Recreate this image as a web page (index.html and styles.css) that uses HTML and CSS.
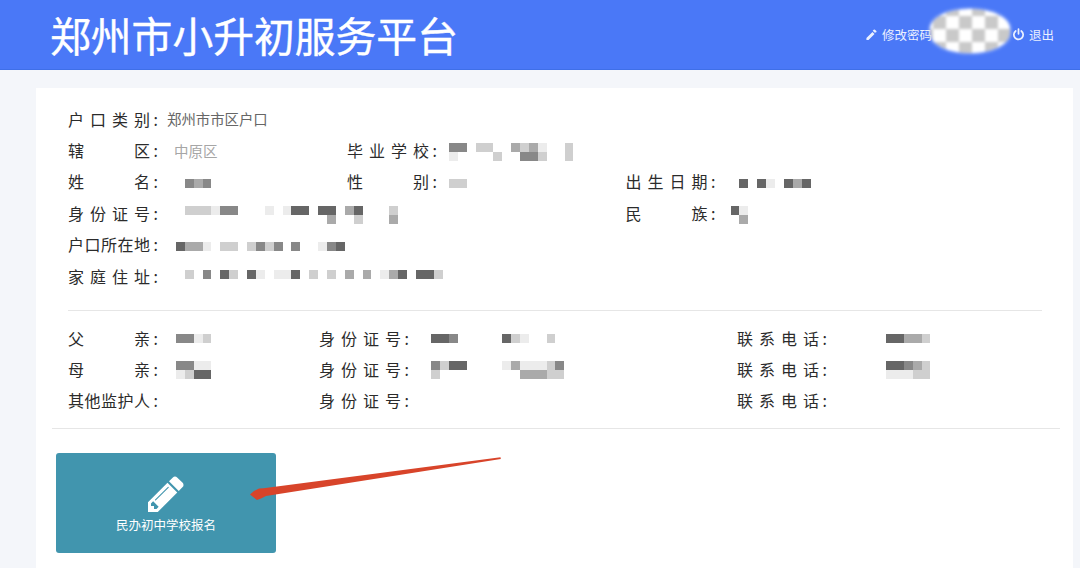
FILE: index.html
```html
<!DOCTYPE html>
<html lang="zh-CN">
<head>
<meta charset="utf-8">
<title>郑州市小升初服务平台</title>
<link rel="stylesheet" href="styles.css">
</head>
<body>
<header class="topbar">
  <h1 class="brand">郑州市小升初服务平台</h1>
  <nav class="usernav">
    <a class="navlink"><svg class="ico-pen" viewBox="0 0 1536 1792"><path fill="currentColor" d="M0 1376v288h288l832-832-288-288zM1358 594q37-39 37-91t-37-91l-178-178q-39-37-91-37t-90 37l-133 133 288 288z"/></svg>修改密码</a>
    <span class="avatar-mask"></span>
    <a class="navlink"><svg class="ico-power" viewBox="0 0 14 14"><path fill="none" stroke="currentColor" stroke-width="1.9" stroke-linecap="round" d="M4 3.2a5 5 0 1 0 6 0M7 1.2v5"/></svg>退出</a>
  </nav>
</header>

<main class="card">
  <section class="info">
    <div class="row top">
      <div class="field first"><span class="k">户口类别</span><span class="v plain">郑州市市区户口</span></div>
    </div>
    <div class="row top">
      <div class="field first"><span class="k">辖区</span><span class="v muted">中原区</span></div>
      <div class="field second">
        <span class="k">毕业学校</span>
        <div class="mosaic">
          <div class="mr"><i class="t2"></i><i class="t2"></i><i></i><i class="t4"></i><i class="t4"></i><i></i><i></i><i class="t3"></i><i class="t4"></i><i class="t3"></i><i class="t5"></i><i></i><i></i><i class="t4"></i></div>
          <div class="mr"><i class="t5"></i><i></i><i></i><i></i><i></i><i class="t4"></i><i></i><i></i><i class="t2"></i><i class="t2"></i><i class="t4"></i><i></i><i></i><i class="t4"></i></div>
        </div>
      </div>
    </div>
    <div class="row top">
      <div class="field first">
        <span class="k">姓名</span>
        <div class="mosaic"><div class="mr"><i></i><i></i><i class="t2"></i><i class="t3"></i><i class="t2"></i></div></div>
      </div>
      <div class="field second">
        <span class="k">性别</span>
        <div class="mosaic"><div class="mr"><i class="t4"></i><i class="t4"></i></div></div>
      </div>
      <div class="field third">
        <span class="k">出生日期</span>
        <div class="mosaic"><div class="mr"><i></i><i class="t1"></i><i></i><i class="t1"></i><i class="t5"></i><i></i><i class="t1"></i><i class="t3"></i><i class="t1"></i></div></div>
      </div>
    </div>
    <div class="row top">
      <div class="field first">
        <span class="k">身份证号</span>
        <div class="mosaic">
          <div class="mr"><i></i><i></i><i class="t4"></i><i class="t4"></i><i class="t4"></i><i class="t5"></i><i class="t2"></i><i class="t2"></i><i></i><i></i><i></i><i class="t5"></i><i></i><i class="t5"></i><i class="t1"></i><i class="t1"></i><i></i><i class="t1"></i><i class="t1"></i><i></i><i class="t3"></i><i class="t1"></i><i></i><i></i><i></i><i class="t4"></i></div>
          <div class="mr"><i></i><i></i><i></i><i></i><i></i><i></i><i></i><i></i><i></i><i></i><i></i><i></i><i></i><i></i><i></i><i></i><i></i><i></i><i class="t3"></i><i></i><i></i><i class="t4"></i><i></i><i></i><i></i><i class="t3"></i></div>
        </div>
      </div>
      <div class="field second"></div>
      <div class="field third">
        <span class="k">民族</span>
        <div class="mosaic">
          <div class="mr"><i class="t1"></i><i class="t5"></i></div>
          <div class="mr"><i></i><i class="t3"></i></div>
        </div>
      </div>
    </div>
    <div class="row top">
      <div class="field first wide">
        <span class="k">户口所在地</span>
        <div class="mosaic"><div class="mr"><i></i><i class="t1"></i><i class="t3"></i><i class="t3"></i><i class="t5"></i><i></i><i class="t4"></i><i class="t4"></i><i></i><i class="t4"></i><i class="t2"></i><i class="t4"></i><i class="t2"></i><i></i><i class="t2"></i><i></i><i></i><i class="t5"></i><i class="t2"></i><i class="t1"></i></div></div>
      </div>
    </div>
    <div class="row top home">
      <div class="field first wide">
        <span class="k">家庭住址</span>
        <div class="mosaic"><div class="mr"><i></i><i></i><i class="t4"></i><i></i><i class="t2"></i><i></i><i class="t1"></i><i class="t4"></i><i></i><i class="t1"></i><i class="t5"></i><i></i><i class="t5"></i><i class="t5"></i><i class="t1"></i><i></i><i class="t4"></i><i></i><i class="t4"></i><i></i><i class="t3"></i><i></i><i class="t3"></i><i></i><i class="t5"></i><i class="t3"></i><i class="t1"></i><i></i><i class="t1"></i><i class="t1"></i><i class="t4"></i></div></div>
      </div>
    </div>
  </section>

  <hr class="rule inner">

  <section class="guardians">
    <div class="row bottom">
      <div class="field first">
        <span class="k">父亲</span>
        <div class="mosaic"><div class="mr"><i></i><i class="t2"></i><i class="t2"></i><i class="t5"></i><i class="t4"></i></div></div>
      </div>
      <div class="field mid">
        <span class="k">身份证号</span>
        <div class="mosaic"><div class="mr"><i class="t1"></i><i class="t1"></i><i class="t2"></i><i></i><i></i><i></i><i></i><i></i><i class="t1"></i><i class="t4"></i><i class="t5"></i><i></i><i></i><i class="t4"></i></div></div>
      </div>
      <div class="field last">
        <span class="k">联系电话</span>
        <div class="mosaic"><div class="mr"><i class="t1"></i><i class="t1"></i><i class="t3"></i><i class="t3"></i><i class="t4"></i></div></div>
      </div>
    </div>
    <div class="row bottom">
      <div class="field first">
        <span class="k">母亲</span>
        <div class="mosaic">
          <div class="mr"><i></i><i class="t2"></i><i class="t2"></i><i class="t5"></i><i class="t5"></i></div>
          <div class="mr"><i></i><i class="t5"></i><i class="t4"></i><i class="t1"></i><i class="t1"></i></div>
        </div>
      </div>
      <div class="field mid">
        <span class="k">身份证号</span>
        <div class="mosaic">
          <div class="mr"><i class="t2"></i><i class="t4"></i><i class="t1"></i><i class="t1"></i><i></i><i></i><i></i><i></i><i class="t5"></i><i class="t3"></i><i class="t5"></i><i class="t5"></i><i class="t5"></i><i class="t4"></i><i class="t2"></i></div>
          <div class="mr"><i class="t4"></i><i></i><i></i><i></i><i></i><i></i><i></i><i></i><i></i><i></i><i class="t3"></i><i class="t3"></i><i class="t3"></i><i class="t4"></i><i class="t4"></i></div>
        </div>
      </div>
      <div class="field last">
        <span class="k">联系电话</span>
        <div class="mosaic">
          <div class="mr"><i class="t1"></i><i class="t1"></i><i class="t2"></i><i class="t3"></i><i class="t4"></i></div>
          <div class="mr"><i class="t5"></i><i class="t5"></i><i class="t5"></i><i class="t4"></i><i class="t4"></i></div>
        </div>
      </div>
    </div>
    <div class="row bottom">
      <div class="field first"><span class="k">其他监护人</span></div>
      <div class="field mid"><span class="k">身份证号</span></div>
      <div class="field last"><span class="k">联系电话</span></div>
    </div>
  </section>

  <hr class="rule outer">

  <a class="tile">
    <svg class="ico-tile" viewBox="0 0 1536 1792"><path fill="currentColor" d="M363 1536l91-91-235-235-91 91v107h128v128h107zm523-928q0-22-22-22-10 0-17 7l-542 542q-7 7-7 17 0 22 22 22 10 0 17-7l542-542q7-7 7-17zm-54-192l416 416-832 832h-416v-416zm683 96q0 53-37 90l-166 166-416-416 166-165q36-38 90-38 53 0 91 38l235 234q37 39 37 91z"/></svg>
    <span>民办初中学校报名</span>
  </a>
</main>

<svg class="arrow" viewBox="0 0 1080 568"><path d="M500.500 457.200l.3 1.800L266 496l-5 2.500-4 1.500-7-5.500 4-3.500 5-2.500 4.500-.2z"/></svg>
</body>
</html>
```

FILE: styles.css
```css
* { box-sizing: border-box; }

html, body {
  margin: 0;
  height: 568px;
  overflow: hidden;
}

body {
  position: relative;
  background: #f4f6fa;
  color: #2b2b2b;
  font-family: "Noto Sans CJK SC", "Noto Sans", sans-serif;
}

.topbar {
  height: 70px;
  background: #4a78f7;
  border-bottom: 1px solid #3f6fe8;
  display: flex;
  align-items: center;
  justify-content: space-between;
  padding: 0 26px 0 50px;
  color: #fff;
}

.brand {
  margin: 0;
  font-size: 40.800px;
  font-weight: 400;
  line-height: 70px;
  white-space: nowrap;
  -webkit-text-stroke: 0.4px #fff;
}

.usernav {
  display: flex;
  align-items: center;
  font-size: 12.500px;
  color: #eaf0ff;
}

.navlink {
  display: flex;
  align-items: center;
  gap: 4px;
}

.ico-pen { width: 12px; height: 13px; }
.ico-power { width: 13px; height: 13px; }

.avatar-mask {
  width: 80px;
  height: 44px;
  border-radius: 40px / 20px;
  background: repeating-conic-gradient(#c9c9c9 0 25%, #fff 0 50%) 16px 7px / 26px 26px;
  filter: blur(1.500px);
  box-shadow: 0 0 3px #fff;
  margin: 0 2px 8px -2px;
}

.card {
  margin: 18px 7px 0 36px;
  height: 480px;
  background: #fff;
  padding: 15px 13px 0 16px;
}

.row {
  display: flex;
  height: 31.400px;
  align-items: center;
  padding-left: 16px;
}

.row.bottom { height: 31px; }

.field {
  display: flex;
  align-items: center;
  font-size: 16px;
}

.top .first { width: 279px; }
.top .second { width: 278.500px; }
.top .first.wide { width: 100%; }
.bottom .first { width: 251px; }
.bottom .mid { width: 418px; }

.k {
  display: block;
  flex: none;
  width: 90px;
  white-space: nowrap;
  text-align-last: justify;
}

.k::after {
  content: ":";
  float: right;
  width: 8px;
  text-align-last: right;
}

.first .k { margin-right: 9px; }
.second .k { margin-right: 12px; }
.third .k { margin-right: 15px; }
.mid .k { margin-right: 22px; }
.last .k { margin-right: 59px; }

.v { white-space: nowrap; }

.plain {
  font-size: 14.400px;
  color: #666;
}

.muted {
  font-size: 14.500px;
  color: #a6a6a6;
  padding-left: 7px;
}

.mosaic {
  display: flex;
  flex-direction: column;
  filter: blur(0.4px);
}

.top .mosaic { margin-top: 4px; }
.top.home .mosaic { margin-top: -2px; }
.bottom .mosaic { margin-top: 1px; }

.mr { display: flex; height: 9px; }
.mr i { flex: none; width: 8.900px; }

.t1 { background: #666; }
.t2 { background: #888; }
.t3 { background: #aaa; }
.t4 { background: #cfcfcf; }
.t5 { background: #ececec; }

.rule {
  border: 0;
  height: 1px;
  background: #e6e6e6;
  margin: 0;
}

.inner { margin: 19px 18px 11.500px 16px; }
.outer { margin: 12.500px 0 24px; }

.tile {
  margin-left: 4px;
  width: 220px;
  height: 100px;
  border-radius: 3px;
  background: #4195ae;
  color: #fff;
  display: flex;
  flex-direction: column;
  align-items: center;
  padding-top: 20px;
  font-size: 12.500px;
  line-height: 18px;
}

.ico-tile {
  width: 36px;
  height: 42px;
  margin-bottom: 1px;
}

.arrow {
  position: absolute;
  inset: 0;
  width: 1080px;
  height: 568px;
  fill: #d8442a;
}
```
